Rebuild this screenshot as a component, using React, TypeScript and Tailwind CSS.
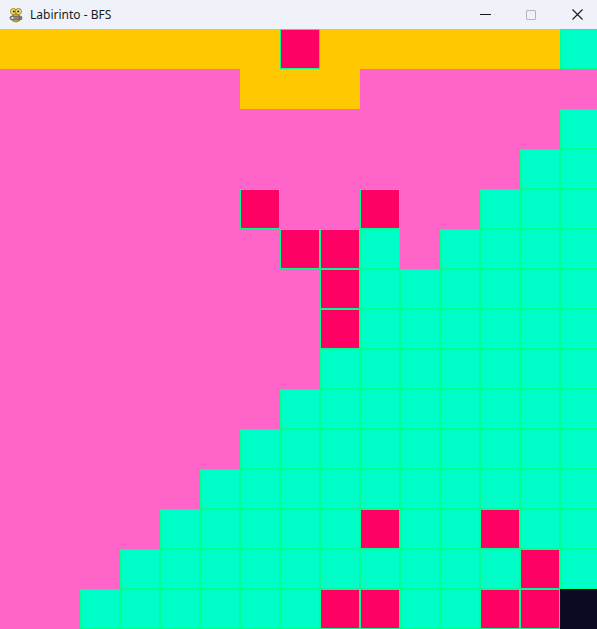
import React from "react";

// Y = yellow, P = pink, R = red, T = teal, D = dark
const rows = [
  "YYYYYYYRYYYYYYT",
  "PPPPPPYYYPPPPPP",
  "PPPPPPPPPPPPPPT",
  "PPPPPPPPPPPPPTT",
  "PPPPPPRPPRPPTTT",
  "PPPPPPPRRTPTTTT",
  "PPPPPPPPRTTTTTT",
  "PPPPPPPPRTTTTTT",
  "PPPPPPPPTTTTTTT",
  "PPPPPPPTTTTTTTT",
  "PPPPPPTTTTTTTTT",
  "PPPPPTTTTTTTTTT",
  "PPPPTTTTTRTTRTT",
  "PPPTTTTTTTTTTRT",
  "PPTTTTTTRRTTRRD",
];

function Cell({ t }: { t: string }) {
  if (t === "Y") return <div className="w-10 h-10 bg-[#ffc800]" />;
  if (t === "P") return <div className="w-10 h-10 bg-[#ff64c8]" />;
  if (t === "D") return <div className="w-10 h-10 bg-[#0a0a23]" />;
  if (t === "R")
    return <div className="w-10 h-10 bg-[#ff0064] border border-[#00ff8c]" />;
  return <div className="w-10 h-10 bg-[#00ffc8] border border-[#00ff8c]" />;
}

function PyIcon() {
  return (
    <svg width="16" height="16" viewBox="0 0 16 16">
      <ellipse cx="8" cy="11" rx="4" ry="4" fill="#f3d23a" stroke="#8a6d10" strokeWidth="0.8" />
      <circle cx="5.5" cy="4.5" r="3" fill="#f7e26a" stroke="#8a6d10" strokeWidth="0.8" />
      <circle cx="10.5" cy="4.5" r="3" fill="#f7e26a" stroke="#8a6d10" strokeWidth="0.8" />
      <circle cx="5.8" cy="4.6" r="1" fill="#222" />
      <circle cx="10.2" cy="4.6" r="1" fill="#222" />
      <rect x="2" y="9" width="12" height="4" rx="2" fill="#888" stroke="#444" strokeWidth="0.6" />
      <circle cx="4.5" cy="11" r="1" fill="#eee" />
      <circle cx="11.5" cy="11" r="0.9" fill="#c33" />
    </svg>
  );
}

export default function App() {
  return (
    <div className="w-[597px] h-[629px] overflow-hidden bg-[#eff3f9] flex flex-col">
      <div className="h-[29px] shrink-0 flex items-center bg-[#eff3f9]" style={{ fontFamily: '"Noto Sans", "Open Sans", sans-serif' }}>
        <div className="pl-[8px] pr-[6px] flex items-center">
          <PyIcon />
        </div>
        <span className="text-[12px] text-[#1a1a1a] leading-none">Labirinto - BFS</span>
        <div className="ml-auto mr-[-3px] flex items-center h-full">
          <div className="w-[46px] h-full flex items-center justify-center">
            <div className="w-[11px] h-px bg-[#1a1a1a]" />
          </div>
          <div className="w-[46px] h-full flex items-center justify-center">
            <div className="w-[10px] h-[10px] border border-[#b5b5b5] rounded-[1px]" />
          </div>
          <div className="w-[46px] h-full flex items-center justify-center">
            <svg width="11" height="11" viewBox="0 0 11 11">
              <path d="M0.5 0.5L10.5 10.5M10.5 0.5L0.5 10.5" stroke="#1a1a1a" strokeWidth="1.1" />
            </svg>
          </div>
        </div>
      </div>
      <div className="w-[600px] grid grid-cols-[repeat(15,40px)] grid-rows-[repeat(15,40px)]">
        {rows.map((r, i) =>
          r.split("").map((t, j) => <Cell key={`${i}-${j}`} t={t} />)
        )}
      </div>
    </div>
  );
}
